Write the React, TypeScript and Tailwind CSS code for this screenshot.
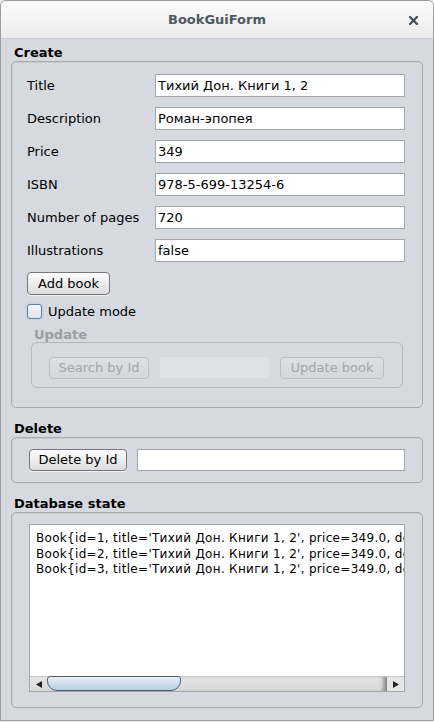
import React from 'react'

const font = { fontFamily: '"DejaVu Sans", sans-serif' }

function Field({ label, value }: { label: string; value: string }) {
  return (
    <div className="flex items-center h-[23px]">
      <span className="w-[128px] text-[13px] text-black">{label}</span>
      <div className="w-[250px] h-[23px] bg-white border border-[#a3a6ab] flex items-center pl-[2px] text-[13px] text-black whitespace-nowrap overflow-hidden">
        {value}
      </div>
    </div>
  )
}

function Button({ children, className = '', disabled = false }: { children: React.ReactNode; className?: string; disabled?: boolean }) {
  return (
    <div
      className={
        'flex items-center justify-center rounded-[4px] border text-[13px] ' +
        (disabled
          ? 'border-[#bcbfc4] bg-gradient-to-b from-[#dcdfe3] to-[#d4d7dc] text-[#a3a6aa] '
          : 'border-[#76797e] bg-gradient-to-b from-[#fdfdfd] to-[#dcdcdc] text-black shadow-[0_1px_0_rgba(255,255,255,0.6)] ') +
        className
      }
    >
      {children}
    </div>
  )
}

function Section({ title, children, className = '' }: { title: string; children: React.ReactNode; className?: string }) {
  return (
    <div className="flex flex-col">
      <div className="h-[17px] pl-[3px] text-[13px] font-bold text-black leading-[17px]">{title}</div>
      <div className={'rounded-[5px] border border-[#a7aaaf] shadow-[inset_1px_1px_0_rgba(0,0,0,0.06)] ' + className}>
        {children}
      </div>
    </div>
  )
}

const rows = [
  ['Title', 'Тихий Дон. Книги 1, 2'],
  ['Description', 'Роман-эпопея'],
  ['Price', '349'],
  ['ISBN', '978-5-699-13254-6'],
  ['Number of pages', '720'],
  ['Illustrations', 'false'],
]

const books = [1, 2, 3].map(
  (id) => `Book{id=${id}, title='Тихий Дон. Книги 1, 2', price=349.0, description='Роман-эпопея'}`
)

export default function App() {
  return (
    <div style={font} className="w-[434px] h-[722px] bg-[#e9eaec]">
      <div className="w-[434px] h-[721px] flex flex-col rounded-t-[6px] border border-[#9a9da2] bg-[#d6d9df] overflow-hidden">
        {/* Title bar */}
        <div className="relative h-[38px] shrink-0 flex items-center justify-center bg-gradient-to-b from-[#fbfbfb] to-[#ececec] border-b border-[#c9ccd0]">
          <span className="text-[13px] font-bold text-[#4d5960]">BookGuiForm</span>
          <svg className="absolute left-[408px] top-[15px]" width="9" height="9" viewBox="0 0 9 9">
            <path d="M1 1 L8 8 M8 1 L1 8" stroke="#3e4c54" strokeWidth="2.2" strokeLinecap="square" />
          </svg>
        </div>

        <div className="flex flex-col px-[10px] pt-[5px] gap-[3px]">
          {/* Create */}
          <Section title="Create" className="h-[347px] pt-[12px] pl-[15px]">
            <div className="flex flex-col gap-[10px]">
              {rows.map(([l, v]) => (
                <Field key={l} label={l} value={v} />
              ))}
            </div>
            <Button className="mt-[10px] w-[83px] h-[23px]">Add book</Button>
            <div className="mt-[9px] flex items-center h-[15px] gap-[6px]">
              <div className="w-[15px] h-[15px] rounded-[3px] border border-[#5f7fa6] bg-gradient-to-b from-[#f4f6f9] to-[#dfe3e9] shadow-[0_0_2px_#9fc0e6]" />
              <span className="text-[13px] text-black">Update mode</span>
            </div>
            <div className="mt-[8px] pl-[7px] h-[15px] text-[13px] font-bold text-[#9b9ea2] leading-[15px]">Update</div>
            <div className="ml-[4px] w-[372px] h-[46px] rounded-[6px] border border-[#b5b8bd] flex items-start pt-[14px] pl-[17px] gap-[11px]">
              <Button disabled className="w-[100px] h-[22px]">Search by Id</Button>
              <div className="w-[109px] h-[21px] bg-[#dfe1e5]" />
              <Button disabled className="w-[104px] h-[22px]">Update book</Button>
            </div>
          </Section>

          {/* Delete */}
          <div className="mt-[9px]">
            <Section title="Delete" className="h-[46px] flex items-center pl-[17px] gap-[10px]">
              <Button className="w-[98px] h-[22px]">Delete by Id</Button>
              <div className="w-[268px] h-[22px] bg-white border border-[#a3a6ab]" />
            </Section>
          </div>

          {/* Database state */}
          <div className="mt-[9px]">
            <Section title="Database state" className="h-[196px] pt-[11px] pl-[17px]">
              <div className="w-[376px] h-[168px] border border-[#a3a6ab] bg-white flex flex-col">
                <div className="flex-1 overflow-hidden pt-[6px] pl-[6px] text-[12px] tracking-[0.3px] leading-[15.5px] text-black whitespace-pre">
                  {books.map((b) => (
                    <div key={b}>{b}</div>
                  ))}
                </div>
                {/* horizontal scrollbar */}
                <div className="h-[15px] flex items-center bg-gradient-to-b from-[#e4e4e4] to-[#d9d9d9] border-t border-[#c8c8c8]">
                  <div className="w-[17px] h-full flex items-center justify-center">
                    <svg width="6" height="7" viewBox="0 0 6 7"><path d="M0 3.5 L6 0 L6 7 Z" fill="#222" /></svg>
                  </div>
                  <div className="w-[134px] h-[15px] -mt-[1px] rounded-b-[10px] rounded-t-[3px] border border-[#4b5f73] bg-gradient-to-b from-[#e9f0f7] to-[#b9cde0]" />
                  <div className="flex-1 h-full shadow-[inset_-6px_0_5px_-3px_rgba(0,0,0,0.45)]" />
                  <div className="w-[17px] h-full flex items-center justify-center bg-[#e6e6e6]">
                    <svg width="6" height="7" viewBox="0 0 6 7"><path d="M6 3.5 L0 0 L0 7 Z" fill="#222" /></svg>
                  </div>
                </div>
              </div>
            </Section>
          </div>
        </div>
      </div>
    </div>
  )
}
